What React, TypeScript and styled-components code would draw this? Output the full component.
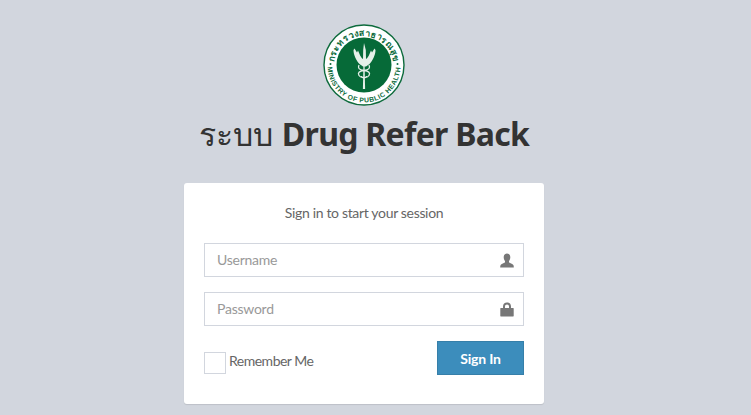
import styled, { createGlobalStyle } from "styled-components";

const GlobalStyle = createGlobalStyle`
	html, body {
		margin: 0;
		height: 100%;
		background: #d2d6de;
		overflow: hidden;
	}
	body {
		font-family: "Lato", "Noto Sans", sans-serif;
		color: #666;
	}
`;

const Page = styled.main`
	display: flex;
	flex-flow: column nowrap;
	align-items: center;
	width: 728px;
	height: 415px;
	padding-top: 24px;
	box-sizing: border-box;
`;

const Logo = styled.svg`
	display: block;
	width: 82px;
	height: 82px;
`;

const Title = styled.h1`
	display: flex;
	align-items: baseline;
	gap: 9px;
	margin: 8px 0 29px;
	font-size: 32px;
	line-height: 40px;
	font-weight: 400;
	color: #333;
	white-space: nowrap;

	& b {
		font-family: "Noto Sans", sans-serif;
		font-weight: 700;
		letter-spacing: -.72px;
	}
`;

const Card = styled.section`
	width: 360px;
	height: 221px;
	padding: 20px;
	box-sizing: border-box;
	background: #fff;
	border-radius: 3px;
	box-shadow: 0 1px 1px rgba(0, 0, 0, .1);
`;

const Lead = styled.p`
	margin: 0 0 20px;
	font-size: 14px;
	line-height: 20px;
	letter-spacing: -.33px;
	text-align: center;
	color: #666;
`;

const Field = styled.div`
	display: flex;
	align-items: center;
	justify-content: space-between;
	height: 34px;
	margin-bottom: 15px;
	padding: 0 9px 0 12px;
	box-sizing: border-box;
	border: 1px solid #d2d6de;
	background: #fff;
	color: #777;
`;

const Input = styled.input`
	flex: 1;
	min-width: 0;
	border: 0;
	padding: 0 0 2px;
	outline: 0;
	background: transparent;
	font: 14px "Lato", "Noto Sans", sans-serif;
	letter-spacing: -.25px;
	color: #555;

	&::placeholder {
		color: #999;
		opacity: 1;
	}
`;

const Glyph = styled.svg`
	display: block;
	width: 14px;
	height: 15px;
	fill: currentColor;
`;

const Actions = styled.div`
	display: flex;
	align-items: flex-start;
	justify-content: space-between;
`;

const Remember = styled.label`
	display: flex;
	align-items: flex-start;
	gap: 3px;
	margin-top: 11px;
	font-size: 14px;
	line-height: 18px;
	letter-spacing: -.5px;
	color: #666;
`;

const Check = styled.input`
	appearance: none;
	width: 22px;
	height: 22px;
	margin: 0;
	border: 1px solid #d2d6de;
	background: #fff;
`;

const SignIn = styled.button`
	width: 87px;
	height: 34px;
	border: 1px solid #367fa9;
	border-radius: 0;
	background: #3c8dbc;
	color: #fff;
	font: 700 14px "Lato", "Noto Sans", sans-serif;
	letter-spacing: -.2px;
`;

const UserGlyph = () => (
	<Glyph viewBox="0 0 14 15" aria-hidden="true">
		<path d="M7 .5c2 0 3.300 1.500 3.300 3.700 0 1.500-.5 2.900-1.300 3.700v1.300c0 .7 3.900 1.400 4.500 3 .2.6.3 1.400.3 2.300H.2c0-.9.1-1.700.3-2.300.6-1.600 4.500-2.300 4.500-3V7.900C4.200 7.100 3.700 5.700 3.700 4.200 3.700 2 5 .5 7 .5z" />
	</Glyph>
);

const LockGlyph = () => (
	<Glyph viewBox="0 0 14 15" aria-hidden="true">
		<path d="M3 6V4.500C3 2 4.600.5 7 .5s4 1.500 4 4V6h2.200c.3 0 .5.200.5.500v7.600c0 .3-.2.500-.5.500H.8c-.3 0-.5-.2-.5-.5V6.500c0-.3.2-.5.500-.5H3zm2 0h4V4.500C9 3.200 8.200 2.400 7 2.400s-2 .8-2 2.100V6z" />
	</Glyph>
);

const App = () => (
	<>
		<GlobalStyle />
		<Page>
			<Logo viewBox="0 0 82 82" role="img" aria-label="Ministry of Public Health">
				<defs>
					<path id="ring-top" d="M11 42a30 30 0 0 1 60 0" />
					<path id="ring-bottom" d="M4.500 42a36.500 36.500 0 0 0 73 0" />
				</defs>
				<circle cx="41" cy="41" r="40" fill="#fff" stroke="#0d6b3c" strokeWidth="1.400" />
				<circle cx="41" cy="41" r="27.500" fill="#066a38" />
				<text fontSize="8.800" fontWeight="700" fill="#0d6b3c" fontFamily="'Noto Sans', sans-serif" letterSpacing=".5">
					<textPath href="#ring-top" startOffset="50%" textAnchor="middle">กระทรวงสาธารณสุข</textPath>
				</text>
				<text fontSize="6.800" fontWeight="700" fill="#0d6b3c" fontFamily="'Liberation Sans', sans-serif" letterSpacing=".5">
					<textPath href="#ring-bottom" startOffset="50%" textAnchor="middle">MINISTRY OF PUBLIC HEALTH</textPath>
				</text>
				<circle cx="7.500" cy="40" r="1" fill="#0d6b3c" />
				<circle cx="74.500" cy="40" r="1" fill="#0d6b3c" />
				{/* winged staff */}
				<path
					d="M41 19l1.800 7 .2 9c1.500-1 2.500-2.500 3.500-5l1.500-3.500 1 2 2.500-4 1 1.500c0 5-3 11-6 14l-3.500 2.500h-3l-3.500-2.500c-3-3-6-9-6-14l1-1.500 2.500 4 1-2 1.500 3.500c1 2.500 2 4 3.500 5l.2-9z"
					fill="#e6f0e9"
				/>
				<path d="M40.400 42h1.200l.5 23h-2.200z" fill="#e6f0e9" />
				<path
					d="M36 41c-1.500 3 0 5 5 5.500s6.500 2.500 5 5-6 2.500-8 1M46 41c1.500 3 0 5-5 5.500s-6.500 2.500-5 5 6 2.500 8 1"
					fill="none"
					stroke="#e6f0e9"
					strokeWidth="1.300"
				/>
			</Logo>
			<Title>ระบบ <b>Drug Refer Back</b></Title>
			<Card>
				<Lead>Sign in to start your session</Lead>
				<Field>
					<Input placeholder="Username" />
					<UserGlyph />
				</Field>
				<Field>
					<Input placeholder="Password" type="password" />
					<LockGlyph />
				</Field>
				<Actions>
					<Remember>
						<Check type="checkbox" />
						Remember Me
					</Remember>
					<SignIn type="button">Sign In</SignIn>
				</Actions>
			</Card>
		</Page>
	</>
);

export default App;
